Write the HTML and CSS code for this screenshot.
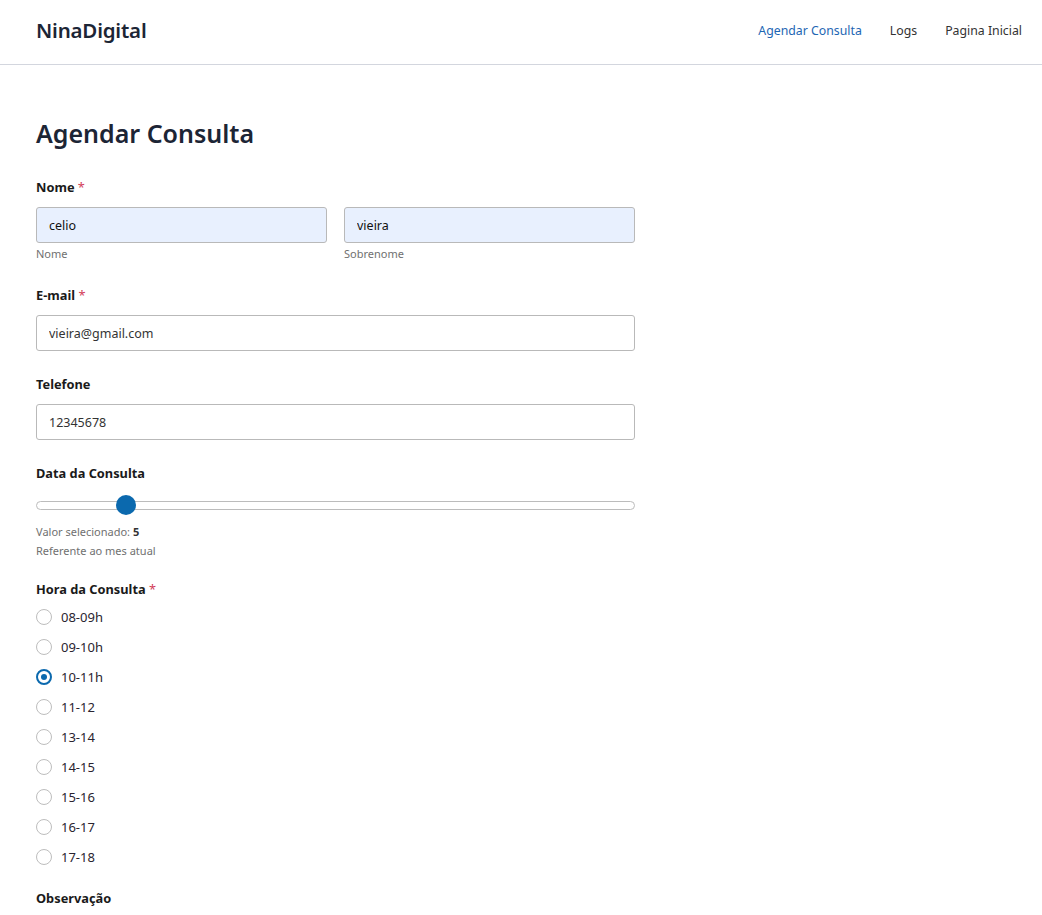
FILE: index.html
```html
<!DOCTYPE html>
<html lang="pt">
<head>
<meta charset="utf-8">
<title>Agendar Consulta</title>
<link rel="stylesheet" href="styles.css">
</head>
<body>
<header class="topbar">
  <div class="brand">NinaDigital</div>
  <nav class="nav">
    <a class="nav-link active" href="#">Agendar Consulta</a>
    <a class="nav-link" href="#">Logs</a>
    <a class="nav-link" href="#">Pagina Inicial</a>
  </nav>
</header>
<main class="content">
  <h1 class="title">Agendar Consulta</h1>
  <form class="form">
    <div class="field field-name">
      <div class="label">Nome <span class="req">*</span></div>
      <div class="name-row">
        <div class="sub">
          <input class="input filled" type="text" value="celio">
          <div class="hint">Nome</div>
        </div>
        <div class="sub">
          <input class="input filled" type="text" value="vieira">
          <div class="hint">Sobrenome</div>
        </div>
      </div>
    </div>
    <div class="field">
      <div class="label">E-mail <span class="req">*</span></div>
      <input class="input" type="text" value="vieira@gmail.com">
    </div>
    <div class="field">
      <div class="label">Telefone</div>
      <input class="input" type="text" value="12345678">
    </div>
    <div class="field field-range">
      <div class="label">Data da Consulta</div>
      <div class="slider">
        <div class="track"></div>
        <div class="thumb" style="left: 13.4%"></div>
      </div>
      <div class="hint">Valor selecionado: <b class="val">5</b></div>
      <div class="hint">Referente ao mes atual</div>
    </div>
    <div class="field field-radios">
      <div class="label">Hora da Consulta <span class="req">*</span></div>
      <div class="radios">
        <label class="radio"><span class="dot"></span>08-09h</label>
        <label class="radio"><span class="dot"></span>09-10h</label>
        <label class="radio"><span class="dot checked"></span>10-11h</label>
        <label class="radio"><span class="dot"></span>11-12</label>
        <label class="radio"><span class="dot"></span>13-14</label>
        <label class="radio"><span class="dot"></span>14-15</label>
        <label class="radio"><span class="dot"></span>15-16</label>
        <label class="radio"><span class="dot"></span>16-17</label>
        <label class="radio"><span class="dot"></span>17-18</label>
      </div>
    </div>
    <div class="field">
      <div class="label">Observação</div>
    </div>
  </form>
</main>
</body>
</html>
```
FILE: styles.css
```css
* { box-sizing: border-box; }
html, body { margin: 0; padding: 0; background: #fff; }
body {
  font-family: "Noto Sans", "Open Sans", sans-serif;
  color: #212529;
  font-size: 13px;
  overflow: hidden;
}
.topbar {
  height: 65px;
  border-bottom: 1px solid #d3d6de;
  display: flex;
  align-items: center;
  justify-content: space-between;
  padding: 0 20px 0 36px;
}
.brand {
  font-size: 20.5px;
  font-weight: 600;
  color: #1c2535;
  letter-spacing: -0.2px;
  margin-top: -4px;
}
.nav { display: flex; gap: 28px; margin-top: -4px; }
.nav-link {
  font-size: 12.3px;
  color: #333;
  text-decoration: none;
}
.nav-link.active { color: #1d66b3; }
.content { padding: 50px 36px 0; }
.title {
  margin: 0 0 27px;
  font-size: 25px;
  font-weight: 600;
  color: #1c2535;
  line-height: 36px;
}
.form { width: 599px; }
.field { margin-bottom: 24px; }
.field-name { margin-bottom: 23px; }
.field-range { margin-bottom: 20px; }
.field-radios { margin-bottom: 23px; }
.label {
  font-weight: 700;
  font-size: 12.8px;
  color: #1a1a1a;
  line-height: 18px;
  margin-bottom: 11px;
}
.req { color: #d23c58; font-weight: 400; }
.name-row { display: flex; gap: 17px; margin-top: 1px; }
.sub { flex: 1; }
.sub .hint { margin-top: 1px; }
.input {
  display: block;
  width: 100%;
  height: 36px;
  border: 1px solid #b9b9b9;
  border-radius: 3px;
  padding: 0 12px;
  font-family: inherit;
  font-size: 12.5px;
  color: #333;
  background: #fff;
  outline: none;
}
.input.filled { background: #e8f0fe; color: #111; }
.hint {
  font-size: 11px;
  color: #707070;
  line-height: 19px;
}
.val { color: #333; }
.slider {
  position: relative;
  height: 24px;
  margin: 4px 0 5px;
}
.track {
  position: absolute;
  left: 0; right: 0; top: 8px;
  height: 9px;
  border: 1px solid #bcbcbc;
  border-radius: 5px;
  background: #fff;
}
.thumb {
  position: absolute;
  top: 2px;
  width: 20px; height: 20px;
  border-radius: 50%;
  background: #0b69ae;
}
.radios { display: flex; flex-direction: column; gap: 12px; margin-top: -1px; }
.radio {
  display: flex;
  align-items: center;
  gap: 9px;
  font-size: 13px;
  color: #2a2430;
  line-height: 18px;
}
.dot {
  width: 16px; height: 16px;
  border: 1px solid #bdbdbd;
  border-radius: 50%;
  background: #fff;
  position: relative;
}
.dot.checked { border: 2px solid #0b69ae; }
.dot.checked::after {
  content: "";
  position: absolute;
  left: 3px; top: 3px;
  width: 6px; height: 6px;
  border-radius: 50%;
  background: #0b69ae;
}
```
